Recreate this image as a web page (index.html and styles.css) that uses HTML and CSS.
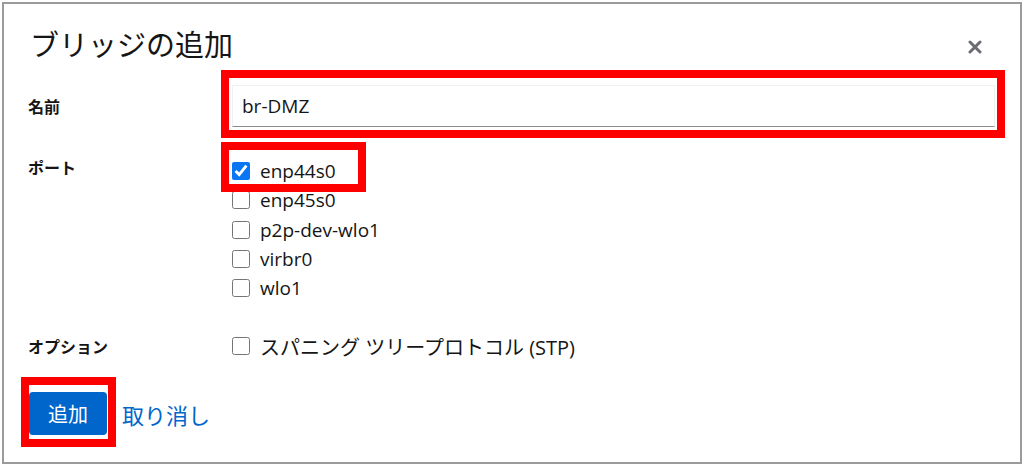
FILE: index.html
```html
<!DOCTYPE html>
<html lang="ja">
<head>
  <meta charset="UTF-8">
  <title>ブリッジの追加</title>
  <link rel="stylesheet" href="styles.css">
</head>
<body>
  <div class="modal">
    <div class="modal-header">
      <h1>ブリッジの追加</h1>
      <button class="close" type="button" aria-label="閉じる">
        <svg width="14" height="14" viewBox="0 0 14 14">
          <path d="M2 2 L12 12 M12 2 L2 12" stroke="#6a6e73" stroke-width="3" stroke-linecap="round"/>
        </svg>
      </button>
    </div>

    <form class="modal-body">
      <div class="field field-name">
        <label class="field-label" for="nombre">名前</label>
        <div class="mark mark-name">
          <input id="nombre" type="text" value="br-DMZ">
        </div>
      </div>

      <div class="field field-ports">
        <span class="field-label">ポート</span>
        <div class="check-list">
          <label class="check mark mark-port"><input type="checkbox" checked> enp44s0</label>
          <label class="check"><input type="checkbox"> enp45s0</label>
          <label class="check"><input type="checkbox"> p2p-dev-wlo1</label>
          <label class="check"><input type="checkbox"> virbr0</label>
          <label class="check"><input type="checkbox"> wlo1</label>
        </div>
      </div>

      <div class="field field-options">
        <span class="field-label">オプション</span>
        <label class="check check-stp"><input type="checkbox"> スパニング ツリープロトコル (STP)</label>
      </div>

      <div class="modal-footer">
        <div class="mark mark-button">
          <button class="btn-primary" type="submit">追加</button>
        </div>
        <button class="btn-link" type="button">取り消し</button>
      </div>
    </form>
  </div>
</body>
</html>
```

FILE: styles.css
```css
html, body {
  margin: 0;
  height: 100%;
}

body {
  padding: 2px;
  box-sizing: border-box;
  background-color: #ffffff;
  color: #151515;
  font-family: 'Open Sans', 'Noto Sans CJK JP', sans-serif;
}

.modal {
  height: 462px;
  box-sizing: border-box;
  border: 2px solid #9b9b9b;
  background-color: #ffffff;
}

.modal-header {
  display: flex;
  justify-content: space-between;
  align-items: center;
  padding: 24px 38px 0 26px;
}

.modal-header h1 {
  margin: 0;
  font-size: 29px;
  line-height: 34px;
  font-weight: 400;
}

.close {
  background: none;
  border: none;
  padding: 0;
  margin-top: 3px;
  cursor: pointer;
  display: flex;
}

.modal-body {
  padding: 0 25px 0 24px;
}

.field {
  display: grid;
  grid-template-columns: 204px 1fr;
}

.field-label {
  font-size: 16px;
  font-weight: 700;
}

.field-name {
  margin-top: 23px;
  align-items: center;
}

.field-name input {
  display: block;
  width: 100%;
  height: 42px;
  box-sizing: border-box;
  border: 1px solid #f0f0f0;
  border-bottom-color: #8a8d90;
  padding: 0 9px;
  font-family: inherit;
  font-size: 19px;
  color: #151515;
  outline: none;
}

.field-ports {
  margin-top: 29.4px;
}

.field-ports .field-label {
  line-height: 24px;
}

.check-list {
  display: flex;
  flex-direction: column;
  align-items: flex-start;
}

.check {
  display: inline-flex;
  align-items: center;
  gap: 10px;
  height: 29.25px;
  font-size: 19px;
  cursor: pointer;
}

.check-stp {
  font-size: 20px;
}

.check input {
  width: 18px;
  height: 18px;
  margin: 0;
  accent-color: #0b76f4;
}

.field-options {
  margin-top: 28.8px;
  align-items: center;
  justify-items: start;
}

.modal-footer {
  display: flex;
  align-items: center;
  margin-top: 31.35px;
  padding-left: 1px;
}

.btn-primary {
  height: 43px;
  width: 78px;
  padding: 0;
  border: none;
  border-radius: 4px;
  background-color: #0066cc;
  color: #ffffff;
  font-family: inherit;
  font-size: 20px;
  cursor: pointer;
}

.btn-link {
  margin-left: 15px;
  padding: 0;
  border: none;
  background: none;
  color: #0066cc;
  font-family: inherit;
  font-size: 22px;
  cursor: pointer;
}

/* red annotation frames */
.mark {
  position: relative;
}

.mark::after {
  content: '';
  position: absolute;
  border: 8px solid #ff0000;
  pointer-events: none;
}

.mark-name::after {
  top: -15px;
  left: -11px;
  right: -10px;
  bottom: -11px;
}

.mark-port::after {
  top: -14px;
  left: -11px;
  right: -30px;
  bottom: -6px;
}

.mark-button::after {
  top: -15px;
  left: -8px;
  right: -9px;
  bottom: -12px;
}
```
